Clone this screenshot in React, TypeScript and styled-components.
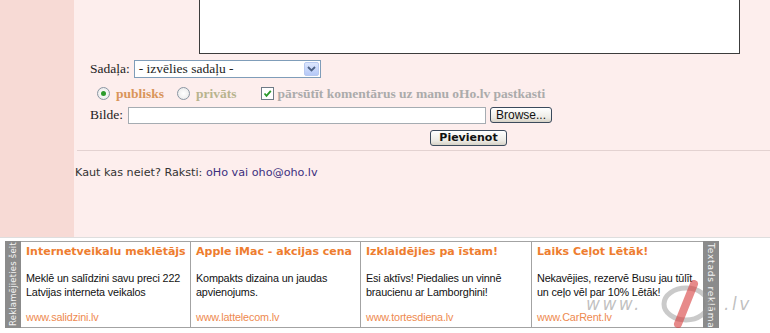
import React from 'react';
import styled, { createGlobalStyle } from 'styled-components';

const GlobalStyle = createGlobalStyle`
  html, body {
    margin: 0;
    padding: 0;
    background: #ffffff;
  }
  body {
    width: 770px;
    height: 333px;
    overflow: hidden;
  }
`;

const Page = styled.div`
  display: flex;
  flex-direction: column;
  width: 770px;
  height: 333px;
`;

const Top = styled.div`
  display: flex;
  height: 237px;
`;

const SideCol = styled.div`
  width: 74px;
  background: #f7dad5;
`;

const Main = styled.div`
  flex: 1;
  background: #fdeeed;
  display: flex;
  flex-direction: column;
`;

const Form = styled.div`
  display: flex;
  flex-direction: column;
  padding-left: 16px;
  font-family: 'Liberation Serif', 'DejaVu Serif', serif;
  font-size: 13.5px;
  color: #222;
`;

const TextareaWrap = styled.div`
  padding-left: 109px;
  height: 54px;
`;

const TextArea = styled.div`
  width: 539px;
  height: 53px;
  background: #fff;
  border: 1px solid #3c3c3c;
  border-top: none;
`;

const Row = styled.div<{ $top: number; $h: number }>`
  display: flex;
  align-items: center;
  margin-top: ${(p) => p.$top}px;
  height: ${(p) => p.$h}px;
`;

const Label = styled.span`
  margin-right: 4px;
`;

const Select = styled.div`
  width: 181px;
  height: 16px;
  border: 1px solid #7f9db9;
  background: #fff;
  display: flex;
  align-items: center;
  justify-content: space-between;
  padding-left: 4px;
  box-sizing: content-box;
`;

const SelectArrow = styled.div`
  width: 15px;
  height: 14px;
  margin-right: 1px;
  border-radius: 2px;
  background: linear-gradient(#dce6fd, #b5c8f7);
  border: 1px solid #b8c9f0;
  display: flex;
  align-items: center;
  justify-content: center;
  box-sizing: border-box;
`;

const Radio = styled.span<{ $checked?: boolean }>`
  width: 11px;
  height: 11px;
  border-radius: 50%;
  border: 1px solid #8a96a3;
  background: radial-gradient(#ffffff, #e6e6e6);
  display: inline-flex;
  align-items: center;
  justify-content: center;
  margin-right: 6px;
  &::after {
    content: '';
    width: 5px;
    height: 5px;
    border-radius: 50%;
    background: ${(p) => (p.$checked ? '#2d9b2d' : 'transparent')};
  }
`;

const Check = styled.span`
  width: 11px;
  height: 11px;
  border: 1px solid #6e7b86;
  background: #fff;
  display: inline-flex;
  align-items: center;
  justify-content: center;
  margin-right: 4px;
`;

const Opt = styled.span<{ $color: string; $gap: number }>`
  font-weight: bold;
  font-size: 13.5px;
  color: ${(p) => p.$color};
  margin-right: ${(p) => p.$gap}px;
`;

const FileInput = styled.div`
  width: 356px;
  height: 15px;
  background: #fff;
  border: 1px solid #a5acb2;
  margin-left: 1px;
`;

const XpButton = styled.div<{ $w: number; $bold?: boolean }>`
  width: ${(p) => p.$w}px;
  height: 16px;
  box-sizing: border-box;
  border: 1px solid #3b4a5c;
  border-radius: 3px;
  background: linear-gradient(#ffffff, #eceae4 70%, #d6d2c6);
  display: flex;
  align-items: center;
  justify-content: center;
  font-family: ${(p) => (p.$bold ? "'DejaVu Sans', Verdana, sans-serif" : "'Liberation Sans', Arial, sans-serif")};
  font-size: ${(p) => (p.$bold ? '11px' : '12px')};
  font-weight: ${(p) => (p.$bold ? 'bold' : 'normal')};
  color: #111;
`;

const Divider = styled.div`
  margin-top: 4px;
  margin-left: 3px;
  height: 1px;
  background: #e3d2d1;
`;

const Contact = styled.div`
  margin-top: 15px;
  padding-left: 1px;
  font-family: 'DejaVu Sans', Verdana, sans-serif;
  font-size: 11.2px;
  color: #333;
`;

const Link = styled.span`
  color: #3b2f7e;
`;

const AdBar = styled.div`
  border-top: 1px solid #dedede;
  padding: 3px 0 0 5px;
  position: relative;
`;

const AdStrip = styled.div`
  display: flex;
  height: 87px;
`;

const SideLabel = styled.div<{ $down?: boolean }>`
  width: 16px;
  background: #8b8b8b;
  color: #f4f4f4;
  font-family: 'DejaVu Sans', Verdana, sans-serif;
  font-size: ${(p) => (p.$down ? '9px' : '8.5px')};
  writing-mode: vertical-rl;
  transform: ${(p) => (p.$down ? 'none' : 'rotate(180deg)')};
  display: flex;
  align-items: center;
  justify-content: ${(p) => (p.$down ? 'flex-start' : 'center')};
  letter-spacing: ${(p) => (p.$down ? '0.8px' : '0.2px')};
  padding-top: ${(p) => (p.$down ? '2px' : '0')};
  box-sizing: border-box;
  white-space: nowrap;
  overflow: hidden;
`;

const Ads = styled.div`
  display: grid;
  grid-template-columns: 170px 170px 171px 171px;
  border-top: 1px solid #a3a3a3;
  border-bottom: 1px solid #a3a3a3;
  box-sizing: border-box;
`;

const Ad = styled.div`
  border-right: 1px solid #a3a3a3;
  padding: 3px 2px 0 5px;
  display: flex;
  flex-direction: column;
  font-family: 'Liberation Sans', Tahoma, sans-serif;
  font-size: 10.8px;
  letter-spacing: -0.15px;
  &:last-child {
    border-right: none;
  }
`;

const AdTitle = styled.div`
  font-family: 'DejaVu Sans', Verdana, sans-serif;
  font-weight: bold;
  font-size: 11px;
  letter-spacing: 0;
  color: #ee7d2f;
  height: 14px;
  white-space: nowrap;
`;

const AdBody = styled.div`
  margin-top: 12px;
  line-height: 14px;
  color: #111;
  flex: 1;
`;

const AdUrl = styled.div`
  color: #ee8a50;
  height: 16px;
`;

const Watermark = styled.div`
  position: absolute;
  left: 586px;
  top: 42px;
  display: flex;
  align-items: center;
  font-family: 'DejaVu Sans', Verdana, sans-serif;
  font-style: italic;
  font-size: 17px;
  letter-spacing: 2.5px;
  color: rgba(140, 140, 140, 0.55);
  pointer-events: none;
  z-index: 2;
`;

const ads = [
  {
    title: 'Internetveikalu meklētājs',
    body: 'Meklē un salīdzini savu preci 222 Latvijas interneta veikalos',
    url: 'www.salidzini.lv',
  },
  {
    title: 'Apple iMac - akcijas cena',
    body: 'Kompakts dizaina un jaudas apvienojums.',
    url: 'www.lattelecom.lv',
  },
  {
    title: 'Izklaidējies pa īstam!',
    body: 'Esi aktīvs! Piedalies un vinnē braucienu ar Lamborghini!',
    url: 'www.tortesdiena.lv',
  },
  {
    title: 'Laiks Ceļot Lētāk!',
    body: 'Nekavējies, rezervē Busu jau tūlīt un ceļo vēl par 10% Lētāk!',
    url: 'www.CarRent.lv',
  },
];

export default function App() {
  return (
    <Page>
      <GlobalStyle />
      <Top>
        <SideCol />
        <Main>
          <Form>
            <TextareaWrap>
              <TextArea />
            </TextareaWrap>
            <Row $top={6} $h={18}>
              <Label>Sadaļa:</Label>
              <Select>
                <span>- izvēlies sadaļu -</span>
                <SelectArrow>
                  <svg width="9" height="6" viewBox="0 0 9 6">
                    <path d="M1 1 L4.5 4.5 L8 1" fill="none" stroke="#4d6185" strokeWidth="1.8" />
                  </svg>
                </SelectArrow>
              </Select>
            </Row>
            <Row $top={7} $h={17} style={{ paddingLeft: 7 }}>
              <Radio $checked />
              <Opt $color="#d9955a" $gap={13}>publisks</Opt>
              <Radio />
              <Opt $color="#b8b48e" $gap={24}>privāts</Opt>
              <Check>
                <svg width="9" height="9" viewBox="0 0 9 9">
                  <path d="M1.5 4.5 L3.5 6.8 L7.8 1.8" fill="none" stroke="#2a9a2a" strokeWidth="1.8" />
                </svg>
              </Check>
              <Opt $color="#ababab" $gap={0}>pārsūtīt komentārus uz manu oHo.lv pastkasti</Opt>
            </Row>
            <Row $top={4} $h={18}>
              <Label>Bilde:</Label>
              <FileInput />
              <XpButton $w={62} style={{ marginLeft: 4 }}>Browse...</XpButton>
            </Row>
            <Row $top={5} $h={17} style={{ paddingLeft: 340 }}>
              <XpButton $w={77} $bold>Pievienot</XpButton>
            </Row>
          </Form>
          <Divider />
          <Contact>
            Kaut kas neiet? Raksti: <Link>oHo vai oho@oho.lv</Link>
          </Contact>
        </Main>
      </Top>
      <AdBar>
        <AdStrip>
          <SideLabel>Reklamējieties šeit</SideLabel>
          <Ads>
            {ads.map((a) => (
              <Ad key={a.url}>
                <AdTitle>{a.title}</AdTitle>
                <AdBody>{a.body}</AdBody>
                <AdUrl>{a.url}</AdUrl>
              </Ad>
            ))}
          </Ads>
          <SideLabel $down>Textads reklāma</SideLabel>
        </AdStrip>
        <Watermark>
          www.
          <svg width="82" height="48" viewBox="0 0 82 48">
            <ellipse cx="44" cy="24" rx="22" ry="16" fill="none" stroke="rgba(150,150,150,0.5)" strokeWidth="5" />
            <path d="M52 4 L36 44" stroke="rgba(215,60,60,0.6)" strokeWidth="8" strokeLinecap="round" />
          </svg>
          .lv
        </Watermark>
      </AdBar>
    </Page>
  );
}
